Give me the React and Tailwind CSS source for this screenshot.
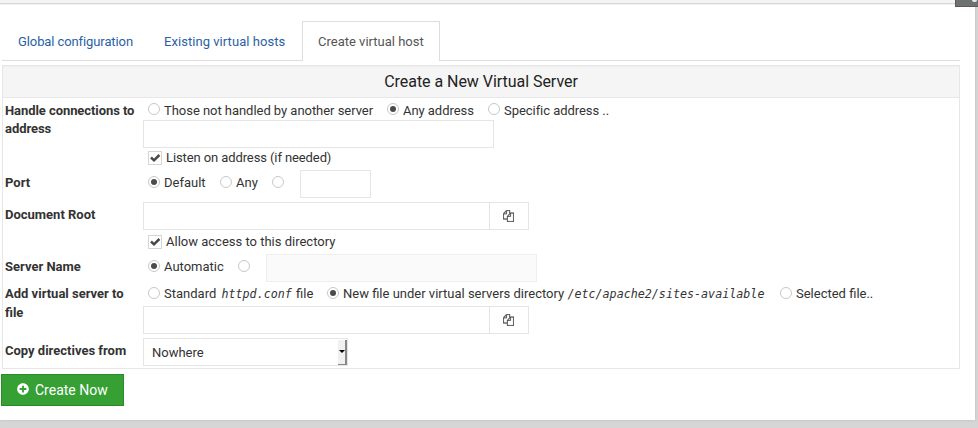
import { FaPlusCircle } from "react-icons/fa";

function Radio({ checked, className = "", children, tracking = "" }) {
  return (
    <label className={`flex shrink-0 gap-1 whitespace-nowrap ${className}`}>
      <span className="mt-[3px] flex h-3 w-3 shrink-0 items-center justify-center rounded-full border border-[#c8c8c8] bg-white">
        {checked && <span className="h-1.5 w-1.5 rounded-full bg-[#4b4b4b]" />}
      </span>
      <span className={`leading-5 ${tracking}`}>{children}</span>
    </label>
  );
}

function Checkbox({ children, tracking = "" }) {
  return (
    <label className="ml-[5px] flex h-5 gap-1 whitespace-nowrap leading-5">
      <span className="mt-[3px] flex h-3.5 w-3.5 items-center justify-center border border-[#d6d6d6] bg-white">
        <svg viewBox="0 0 12 12" className="h-3 w-3" fill="none" stroke="#484848" strokeWidth="2.5">
          <path d="M2 5.5 5 8.3 10.4 3" />
        </svg>
      </span>
      <span className={tracking}>{children}</span>
    </label>
  );
}

function TextBox({ className }) {
  return <div className={`h-7 shrink-0 border border-[#e5e5e5] bg-white ${className}`} />;
}

function FileField() {
  return (
    <div className="flex h-7">
      <TextBox className="w-[347px]" />
      <div className="flex h-7 w-[39px] items-center border border-l-0 border-[#e5e5e5] pl-[13px]">
        <svg viewBox="0 0 1792 1792" className="h-3 w-[11px]" preserveAspectRatio="none" fill="#484848" stroke="#484848" strokeWidth="30">
          <path d="M1696 384q40 0 68 28t28 68v1216q0 40-28 68t-68 28h-960q-40 0-68-28t-28-68v-288h-544q-40 0-68-28t-28-68v-672q0-40 20-88t48-76l408-408q28-28 76-48t88-20h416q40 0 68 28t28 68v328q68-40 128-40h416zm-544 213l-299 299h299v-299zm-640-384l-299 299h299v-299zm196 647l316-316v-416h-384v416q0 40-28 68t-68 28h-416v640h512v-256q0-40 20-88t48-76zm956 804v-1152h-384v416q0 40-28 68t-68 28h-416v640h896z" />
        </svg>
      </div>
    </div>
  );
}

function Row({ label, className, labelClass = "", children }) {
  return (
    <div className={`flex ${className}`}>
      <div className={`w-[140px] shrink-0 pl-0.5 font-bold ${labelClass}`}>{label}</div>
      <div className="min-w-0 flex-1">{children}</div>
    </div>
  );
}

function Path({ children }) {
  return <span className="font-['DejaVu_Sans_Mono',monospace] text-[11.7px] italic tracking-normal">{children}</span>;
}

export default function App() {
  return (
    <div className="h-[428px] w-[978px] overflow-hidden bg-[#d6d6d6] font-['Roboto',sans-serif] text-[13px] text-[#333]">
      <div className="relative h-[420px] w-[975px] bg-white shadow-[0_0_3px_#bbb]">
        <div className="h-1 border-b border-[#d8d8d8] bg-[#f4f4f4] shadow-[0_1px_1px_#f1f1f1]" />
        <nav className="ml-0.5 mt-[17px] flex h-10 w-[958px]">
          <div className="w-[300px] border-b border-[#ddd] pl-4 leading-[42px] text-[#2a5fa5]">
            <span className="inline-block w-[146px] tracking-[-0.1px]">Global configuration</span>
            <span className="tracking-[0.05px]">Existing virtual hosts</span>
          </div>
          <div className="w-[138px] border border-b-0 border-[#ddd] pl-[15px] leading-10 text-[#555]">Create virtual host</div>
          <div className="flex-1 border-b border-[#ddd]" />
        </nav>
        <section className="ml-0.5 mt-1 h-[304px] w-[958px] border border-[#e7e7e7]">
          <h1 className="h-8 border-b border-t border-b-[#e7e7e7] border-t-[#eee] bg-[#f5f5f5] text-center text-base font-normal leading-[29px] tracking-[-0.04px] text-[#222]">
            Create a New Virtual Server
          </h1>
          <Row label="Handle connections to address" className="h-[72px]" labelClass="pt-1 leading-[18px] tracking-[-0.07px]">
            <div className="ml-[5px] flex h-[22px] pt-0.5">
              <Radio className="w-[239px] pt-px -mt-px" tracking="pt-px tracking-[-0.04px]">Those not handled by another server</Radio>
              <Radio checked className="w-[101px] pt-px -mt-px" tracking="pt-px tracking-[-0.05px]">Any address</Radio>
              <Radio className="pt-px -mt-px" tracking="pt-px tracking-[-0.05px]">Specific address ..</Radio>
            </div>
            <TextBox className="w-[351px]" />
            <Checkbox tracking="tracking-[-0.1px]">Listen on address (if needed)</Checkbox>
          </Row>
          <Row label="Port" className="h-8" labelClass="pt-1 leading-[18.5px]">
            <div className="ml-[5px] flex">
              <Radio checked className="w-[72px] pt-[3px]">Default</Radio>
              <Radio className="w-[52px] pt-[3px]">Any</Radio>
              <Radio className="w-7 pt-[3px]" />
              <TextBox className="w-[71px]" />
            </div>
          </Row>
          <Row label="Document Root" className="h-[52px]" labelClass="pt-1 leading-[18.5px]">
            <FileField />
            <div className="pt-0.5"><Checkbox>Allow access to this directory</Checkbox></div>
          </Row>
          <Row label="Server Name" className="h-[29px]" labelClass="pt-1 leading-[18.5px]">
            <div className="ml-[5px] flex">
              <Radio checked className="w-[90px] pt-[3px]">Automatic</Radio>
              <Radio className="w-7 pt-[3px]" />
              <div className="h-7 w-[271px] border border-[#eee] bg-[#fafafa]" />
            </div>
          </Row>
          <Row label={<>Add virtual server to<br />file</>} className="h-[55px]" labelClass="pt-0.5 leading-[18.5px]">
            <div className="ml-[5px] flex h-[23px] pt-px">
              <Radio className="w-[179px]">Standard <span className="ml-0.5 mr-px"><Path>httpd.conf</Path></span> file</Radio>
              <Radio checked className="w-[453px]">New file under virtual servers directory <Path>/etc/apache2/sites-available</Path></Radio>
              <Radio>Selected file..</Radio>
            </div>
            <FileField />
          </Row>
          <Row label="Copy directives from" className="h-7" labelClass="pt-1 leading-[18.5px]">
            <div className="flex h-7 w-[205px] justify-between border border-[#e5e5e5] pl-2 leading-7">
              Nowhere
              <span className="mt-px flex h-[25px] w-[9px] items-center justify-center border-b border-r-2 border-[#888] bg-[#f0f0f0]">
                <span className="-mt-0.5 border-x-[3px] border-t-[3px] border-x-transparent border-t-black" />
              </span>
            </div>
          </Row>
        </section>
        <button className="ml-px mt-[5px] flex h-8 w-[123px] items-center border border-[#2b882b] bg-[#36a034] pl-[15px] text-sm text-white">
          <FaPlusCircle className="mb-0.5 mr-1.5 h-3 w-3" />
          Create Now
        </button>
      </div>
      <div className="absolute left-[955px] top-0 h-[7px] w-[23px] overflow-hidden border-b border-l border-[#5d5959] bg-[#6e716f]">
        <div className="ml-4 h-0.5 w-[5px] rounded-b-full bg-[#d9ecf8]" />
      </div>
    </div>
  );
}
